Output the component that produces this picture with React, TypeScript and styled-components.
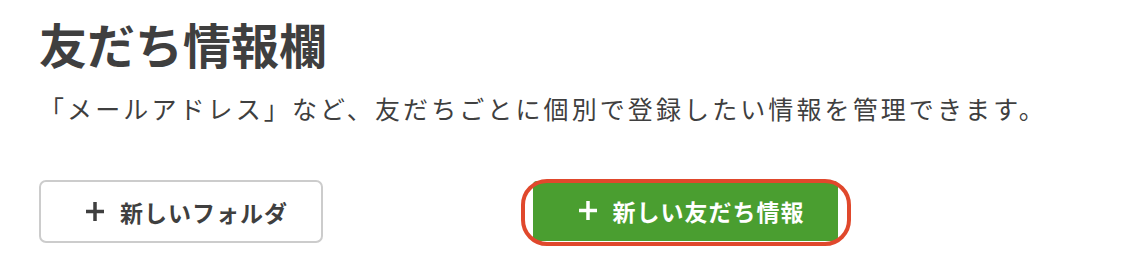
import React from "react";
import styled, { createGlobalStyle } from "styled-components";

const GlobalStyle = createGlobalStyle`
  html, body {
    margin: 0;
    padding: 0;
    background: #ffffff;
  }
  body {
    font-family: "Noto Sans CJK JP", "Noto Sans", sans-serif;
    color: #3f3f3f;
  }
`;

const Page = styled.div`
  padding: 11px 0 0 39px;
  width: 1140px;
  height: 259px;
  box-sizing: border-box;
`;

const Title = styled.h1`
  margin: 0;
  font-size: 48px;
  font-weight: 700;
  line-height: 64px;
  letter-spacing: 0;
  color: #3f3f3f;
`;

const Lead = styled.p`
  margin: 15px 0 0;
  font-size: 25px;
  line-height: 36px;
  letter-spacing: 3.1px;
  color: #3f3f3f;
`;

const Actions = styled.div`
  display: grid;
  grid-template-columns: 494px auto;
  align-items: center;
  margin-top: 54px;
`;

const Button = styled.button<{ $primary?: boolean }>`
  display: flex;
  align-items: center;
  justify-content: center;
  gap: 16px;
  height: ${(p) => (p.$primary ? "60px" : "63px")};
  width: ${(p) => (p.$primary ? "305px" : "284px")};
  padding: 0 0 0 12px;
  box-sizing: border-box;
  border-radius: ${(p) => (p.$primary ? "4px" : "7px")};
  border: ${(p) => (p.$primary ? "none" : "2px solid #cccccc")};
  background: ${(p) => (p.$primary ? "#4a9e30" : "#ffffff")};
  color: ${(p) => (p.$primary ? "#ffffff" : "#3f3f3f")};
  font-family: "Noto Sans CJK JP", "Noto Sans", sans-serif;
  font-size: 23px;
  font-weight: 700;
  letter-spacing: 1px;
  cursor: pointer;
`;

const Highlight = styled.div`
  position: relative;
  justify-self: start;
  margin-top: -2px;

  &::after {
    content: "";
    position: absolute;
    top: -2px;
    left: -12px;
    right: -13px;
    bottom: -5px;
    border: 4px solid #e0482c;
    border-radius: 26px;
    pointer-events: none;
  }
`;

const Plus = ({ color }: { color: string }) => (
  <svg width="18" height="19" viewBox="0 0 18 19" aria-hidden="true">
    <path d="M9 0v19M0 9.5h18" stroke={color} strokeWidth="3.5" />
  </svg>
);

export default function App() {
  return (
    <>
      <GlobalStyle />
      <Page>
        <Title>友だち情報欄</Title>
        <Lead>
          「メールアドレス」など、友だちごとに個別で登録したい情報を管理できます。
        </Lead>
        <Actions>
          <Button>
            <Plus color="#3f3f3f" />
            新しいフォルダ
          </Button>
          <Highlight>
            <Button $primary>
              <Plus color="#ffffff" />
              新しい友だち情報
            </Button>
          </Highlight>
        </Actions>
      </Page>
    </>
  );
}
